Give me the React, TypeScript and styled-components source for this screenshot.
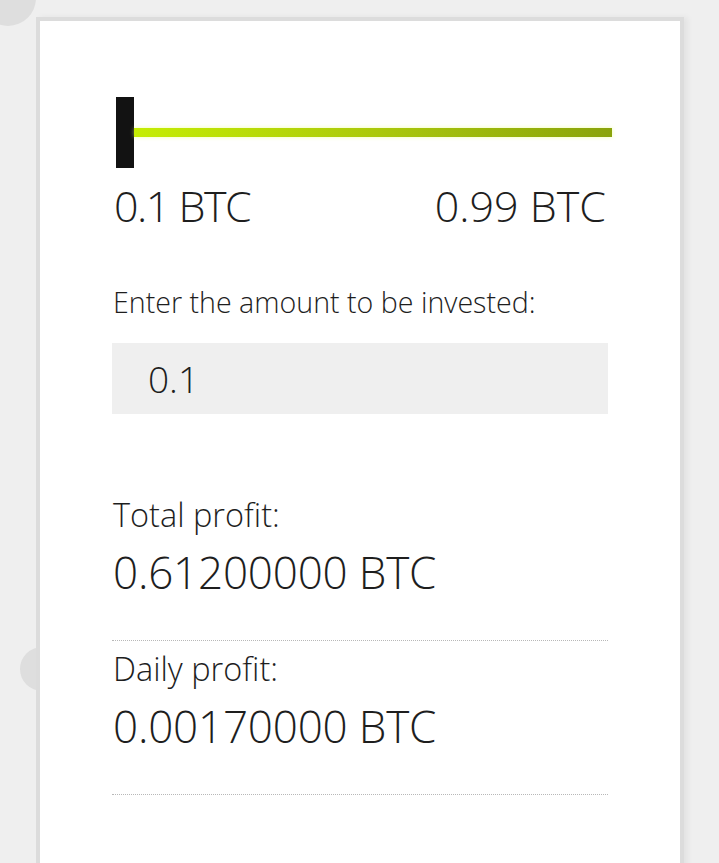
import React from "react";
import styled, { createGlobalStyle } from "styled-components";

const Global = createGlobalStyle`
  html, body { margin: 0; padding: 0; background: #efefef; overflow: hidden; }
  body { font-family: "Open Sans", "Noto Sans", sans-serif; color: #1e1e1e; font-weight: 300; }
`;

const Page = styled.div`
  position: relative;
  width: 719px;
  height: 863px;
  padding: 17px 0 0 36px;
  box-sizing: border-box;
  overflow: hidden;
`;

const Dot = styled.div<{ $x: number; $y: number; $r: number }>`
  position: absolute;
  left: ${(p) => p.$x - p.$r}px;
  top: ${(p) => p.$y - p.$r}px;
  width: ${(p) => p.$r * 2}px;
  height: ${(p) => p.$r * 2}px;
  border-radius: 50%;
  background: #dedede;
`;

const Card = styled.div`
  position: relative;
  z-index: 1;
  width: 496px;
  min-height: 900px;
  background: #fff;
  border: 4px solid #dcdcdc;
  box-shadow: 4px 0 6px rgba(0, 0, 0, 0.05);
  padding: 76px 72px 0 72px;
  box-sizing: content-box;
`;

const Slider = styled.div`
  display: flex;
  align-items: center;
  margin-left: 4px;
  margin-right: -4px;
`;

const Handle = styled.div`
  width: 18px;
  height: 71px;
  background: #121212;
  flex: none;
`;

const Track = styled.div`
  flex: 1;
  height: 9px;
  margin-top: -1px;
  background: linear-gradient(to right, #c5ed02, #abc90a 50%, #8aa30b);
  box-shadow: 0 0 4px rgba(230, 255, 120, 0.6);
`;

const Range = styled.div`
  display: flex;
  justify-content: space-between;
  margin-top: 10px;
  padding: 0 2px;
  font-size: 43px;
  line-height: 56px;
`;

const RangeValue = styled.span<{ $tight?: boolean }>`
  letter-spacing: ${(p) => (p.$tight ? "-1.5px" : "0px")};
`;

const Prompt = styled.div`
  margin-top: 51px;
  padding-left: 1px;
  font-size: 28.6px;
  line-height: 34px;
`;

const AmountBox = styled.div`
  margin-top: 24px;
  height: 71px;
  background: #efefef;
  display: flex;
  align-items: center;
  padding-left: 36px;
  font-size: 37px;
`;

const Stat = styled.div<{ $first?: boolean }>`
  padding: ${(p) => (p.$first ? "80px" : "7px")} 1px 41px 1px;
  border-bottom: 1px dotted #b8b8b8;
`;

const StatLabel = styled.div`
  font-size: 32.5px;
  line-height: 42px;
`;

const StatValue = styled.div`
  margin-top: 9px;
  font-size: 44px;
  line-height: 54px;
  letter-spacing: -0.2px;
`;

export default function App() {
  return (
    <>
      <Global />
      <Page>
        <Dot $x={8} $y={-2} $r={28} />
        <Dot $x={42} $y={669} $r={22} />
        <Card>
          <Slider>
            <Handle />
            <Track />
          </Slider>
          <Range>
            <RangeValue $tight>0.1 BTC</RangeValue>
            <RangeValue>0.99 BTC</RangeValue>
          </Range>
          <Prompt>Enter the amount to be invested:</Prompt>
          <AmountBox>0.1</AmountBox>
          <Stat $first>
            <StatLabel>Total profit:</StatLabel>
            <StatValue>0.61200000 BTC</StatValue>
          </Stat>
          <Stat>
            <StatLabel>Daily profit:</StatLabel>
            <StatValue>0.00170000 BTC</StatValue>
          </Stat>
        </Card>
      </Page>
    </>
  );
}
